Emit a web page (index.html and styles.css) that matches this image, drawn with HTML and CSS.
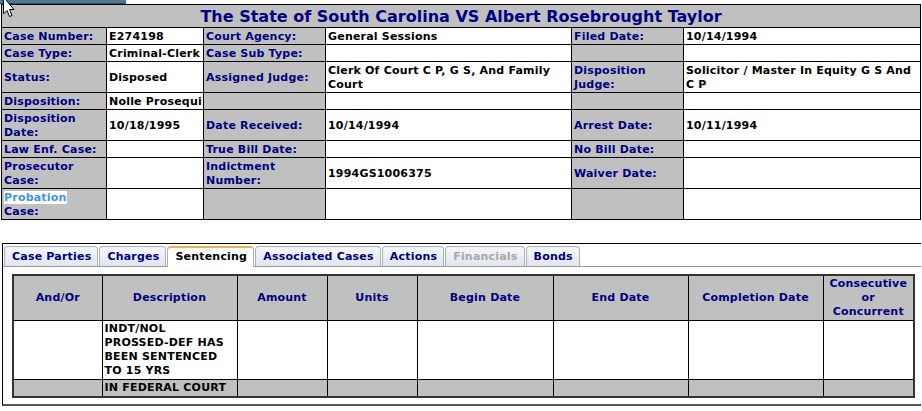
FILE: index.html
```html
<!DOCTYPE HTML>
<html>
<head>
    <title>Case Details</title>
    <meta http-equiv="content-type" content="text/html; charset=utf-8">
    <link rel="stylesheet" href="styles.css">
</head>
<body>
    <div class="topbar"></div>
    <svg class="cursor" width="14" height="20" viewBox="0 0 14 20">
        <path d="M1.5 -3 L1.5 14 L5 10.5 L7.5 16.5 L10 15.5 L7.5 9.5 L12 9.5 Z" fill="#fff" stroke="#000" stroke-width="1"/>
    </svg>

    <table class="case">
        <colgroup>
            <col style="width:105px"><col style="width:97px"><col style="width:122px">
            <col style="width:246px"><col style="width:112px"><col style="width:237px">
        </colgroup>
        <tr><td colspan="6" class="title">The State of South Carolina VS Albert Rosebrought Taylor</td></tr>
        <tr>
            <td class="lbl">Case Number:</td><td class="val">E274198</td>
            <td class="lbl">Court Agency:</td><td class="val">General Sessions</td>
            <td class="lbl">Filed Date:</td><td class="val">10/14/1994</td>
        </tr>
        <tr>
            <td class="lbl">Case Type:</td><td class="val nowrap">Criminal-Clerk</td>
            <td class="lbl">Case Sub Type:</td><td class="val"></td>
            <td class="lbl"></td><td class="val"></td>
        </tr>
        <tr>
            <td class="lbl">Status:</td><td class="val">Disposed</td>
            <td class="lbl">Assigned Judge:</td><td class="val">Clerk Of Court C P, G S, And Family<br>Court</td>
            <td class="lbl">Disposition Judge:</td><td class="val">Solicitor / Master In Equity G S And<br>C P</td>
        </tr>
        <tr>
            <td class="lbl">Disposition:</td><td class="val nowrap">Nolle Prosequi</td>
            <td class="lbl"></td><td class="val"></td>
            <td class="lbl"></td><td class="val"></td>
        </tr>
        <tr>
            <td class="lbl">Disposition Date:</td><td class="val">10/18/1995</td>
            <td class="lbl">Date Received:</td><td class="val">10/14/1994</td>
            <td class="lbl">Arrest Date:</td><td class="val">10/11/1994</td>
        </tr>
        <tr>
            <td class="lbl">Law Enf. Case:</td><td class="val"></td>
            <td class="lbl">True Bill Date:</td><td class="val"></td>
            <td class="lbl">No Bill Date:</td><td class="val"></td>
        </tr>
        <tr>
            <td class="lbl">Prosecutor Case:</td><td class="val"></td>
            <td class="lbl">Indictment Number:</td><td class="val">1994GS1006375</td>
            <td class="lbl">Waiver Date:</td><td class="val"></td>
        </tr>
        <tr>
            <td class="lbl"><span class="picked">Probation</span><br>Case:</td><td class="val"></td>
            <td class="lbl"></td><td class="val"></td>
            <td class="lbl"></td><td class="val"></td>
        </tr>
    </table>

    <div class="tabbox">
        <ul class="tabs">
            <li><a href="#parties">Case Parties</a></li>
            <li><a href="#charges">Charges</a></li>
            <li class="active"><a href="#sentencing">Sentencing</a></li>
            <li><a href="#associated">Associated Cases</a></li>
            <li><a href="#actions">Actions</a></li>
            <li class="disabled"><a href="#financials">Financials</a></li>
            <li><a href="#bonds">Bonds</a></li>
        </ul>
        <div class="panel">
            <table class="sentence">
                <colgroup>
                    <col style="width:89px"><col style="width:135px"><col style="width:90px"><col style="width:90px">
                    <col style="width:136px"><col style="width:135px"><col style="width:135px"><col style="width:91px">
                </colgroup>
                <tr>
                    <th>And/Or</th><th>Description</th><th>Amount</th><th>Units</th>
                    <th>Begin Date</th><th>End Date</th><th>Completion Date</th><th>Consecutive or Concurrent</th>
                </tr>
                <tr>
                    <td></td><td>INDT/NOL<br>PROSSED-DEF HAS<br>BEEN SENTENCED<br>TO 15 YRS</td><td></td><td></td>
                    <td></td><td></td><td></td><td></td>
                </tr>
                <tr class="grey">
                    <td></td><td>IN FEDERAL COURT</td><td></td><td></td>
                    <td></td><td></td><td></td><td></td>
                </tr>
            </table>
        </div>
    </div>
</body>
</html>
```

FILE: styles.css
```css
* {box-sizing: border-box;}

body {
  margin: 0;
  font-family: "DejaVu Sans", Verdana, sans-serif;
  font-size: 11px;
  font-weight: bold;
  line-height: 14px;
  letter-spacing: 0.2px;
  background: #fff;
}

.topbar {
  width: 126px;
  height: 4px;
  background-color: #4d7995;
  border-bottom: 1px solid #2e4d60;
}

.cursor {
  position: absolute;
  left: 2px;
  top: 0;
}

table.case {
  margin: 0 0 0 1px;
  width: 920px;
  table-layout: fixed;
  border-collapse: collapse;
  border: 1px solid #000;
}

table.case td {
  border: 1px solid #000;
  padding: 2px 2px 0;
  height: 17px;
}

table.case td.title {
  background-color: #c0c0c0;
  color: #000080;
  text-align: center;
  font-size: 16px;
  letter-spacing: 0;
  line-height: 20px;
  height: 23px;
  padding: 2px 0 0;
}

.lbl {
  background-color: #c0c0c0;
  color: #000080;
}

.val {
  background-color: #fff;
  color: #000;
}

.nowrap {
  white-space: nowrap;
  overflow: hidden;
}

.picked {
  background-color: #fff;
  color: #3d95e6;
}

.tabbox {
  margin: 23px 1px 0 2px;
  border: 1px solid #000;
  border-bottom: 2px solid #555;
  border-right: none;
  height: 163px;
}

.tabs {
  list-style: none;
  margin: 0;
  padding: 2px 0 0 1px;
  display: flex;
  gap: 1px;
  border-bottom: 1px solid #999;
}

.tabs li a {
  display: block;
  height: 20px;
  padding: 3px 6px 0 7px;
  margin-bottom: -1px;
  color: #000080;
  text-decoration: none;
  background: linear-gradient(#f6f7fb, #e1e5ef);
  border: 1px solid #aab0bc;
  border-bottom: none;
  border-radius: 4px 4px 0 0;
}

.tabs li.active a {
  color: #000;
  background: #fff;
  border-top: 2px solid #f0b44c;
  padding-top: 2px;
  height: 21px;
}

.tabs li.disabled a {
  color: #a8a8a8;
}

.panel {
  padding: 7px 8px 0 9px;
}

table.sentence {
  width: 901px;
  table-layout: fixed;
  border-collapse: collapse;
  border: 2px solid #333;
}

table.sentence th,
table.sentence td {
  border: 1px solid #000;
  padding: 1px 2px;
}

table.sentence th {
  background-color: #c0c0c0;
  color: #000080;
  text-align: center;
  height: 45px;
}

table.sentence td {
  background-color: #fff;
  height: 59px;
}

table.sentence tr.grey td {
  background-color: #c0c0c0;
  height: 17px;
}
```
